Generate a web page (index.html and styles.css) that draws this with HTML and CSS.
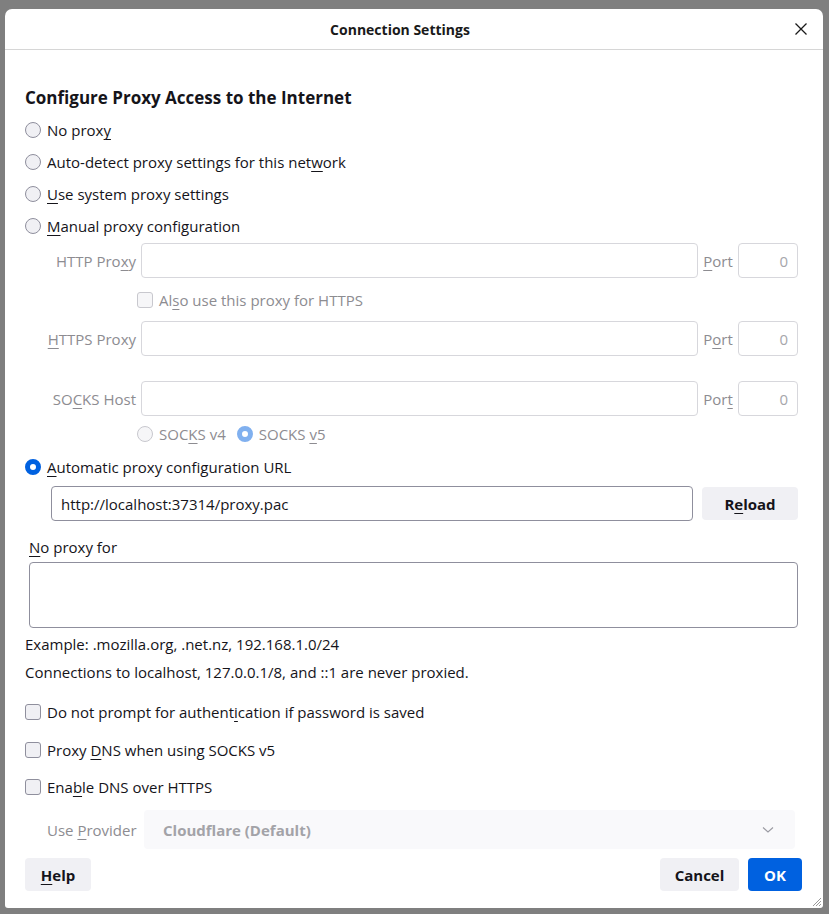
FILE: index.html
```html
<!DOCTYPE html>
<html>
<head>
<meta charset="utf-8">
<link rel="stylesheet" href="styles.css">
</head>
<body>
<div class="dialog">
  <div class="titlebar">
    <span class="title">Connection Settings</span>
    <svg class="close" width="14" height="14" viewBox="0 0 14 14"><path d="M1.5 1.5 L12.5 12.5 M12.5 1.5 L1.5 12.5" stroke="#1a1a1a" stroke-width="1.3" fill="none"/></svg>
  </div>
  <div class="content">
    <h1 class="heading">Configure Proxy Access to the Internet</h1>
    <div class="row"><span class="radio"></span><span>No prox<u>y</u></span></div>
    <div class="row"><span class="radio"></span><span>Auto-detect proxy settings for this net<u>w</u>ork</span></div>
    <div class="row"><span class="radio"></span><span><u>U</u>se system proxy settings</span></div>
    <div class="row"><span class="radio"></span><span><u>M</u>anual proxy configuration</span></div>

    <div class="proxyrow first">
      <span class="plabel">HTTP Pro<u>x</u>y</span>
      <span class="field"></span>
      <span class="portlabel"><u>P</u>ort</span>
      <span class="port">0</span>
    </div>
    <div class="subrow chk">
      <span class="box dis"></span><span class="dim">Al<u>s</u>o use this proxy for HTTPS</span>
    </div>
    <div class="proxyrow">
      <span class="plabel"><u>H</u>TTPS Proxy</span>
      <span class="field"></span>
      <span class="portlabel">P<u>o</u>rt</span>
      <span class="port">0</span>
    </div>
    <div class="proxyrow socks">
      <span class="plabel">SO<u>C</u>KS Host</span>
      <span class="field"></span>
      <span class="portlabel">Por<u>t</u></span>
      <span class="port">0</span>
    </div>
    <div class="subrow socksv">
      <span class="radio dis"></span><span class="dim">SOC<u>K</u>S v4</span>
      <span class="radio checked dis v5"></span><span class="dim">SOCKS <u>v</u>5</span>
    </div>
    <div class="row auto"><span class="radio checked"></span><span><u>A</u>utomatic proxy configuration URL</span></div>
    <div class="urlrow">
      <span class="url">http://localhost:37314/proxy.pac</span>
      <span class="btn reload">R<u>e</u>load</span>
    </div>
    <div class="noproxy"><u>N</u>o proxy for</div>
    <div class="textarea"></div>
    <div class="note n1">Example: .mozilla.org, .net.nz, 192.168.1.0/24</div>
    <div class="note">Connections to localhost, 127.0.0.1/8, and ::1 are never proxied.</div>
    <div class="row crow c1"><span class="box"></span><span>Do not prompt for authent<u>i</u>cation if password is saved</span></div>
    <div class="row crow"><span class="box"></span><span>Proxy <u>D</u>NS when using SOCKS v5</span></div>
    <div class="row crow c3"><span class="box"></span><span>Ena<u>b</u>le DNS over HTTPS</span></div>
    <div class="provider">
      <span class="dim plab">Use <u>P</u>rovider</span>
      <span class="select"><span>Cloudflare (Default)</span>
        <svg width="12" height="8" viewBox="0 0 12 8"><path d="M1 1.5 L6 6 L11 1.5" stroke="#9a9aa2" stroke-width="1.1" fill="none"/></svg>
      </span>
    </div>
    <div class="footer">
      <span class="btn help"><u>H</u>elp</span>
      <span class="spacer"></span>
      <span class="btn cancel">Cancel</span>
      <span class="btn ok">OK</span>
    </div>
  </div>
  <svg class="grip" width="12" height="12" viewBox="0 0 12 12"><path d="M11 3 L3 11 M11 6 L6 11 M11 9 L9 11" stroke="#9a9a9a" stroke-width="1" fill="none"/></svg>
</div>
</body>
</html>
```
FILE: styles.css
```css
html, body {
  margin: 0;
  padding: 0;
  background: #7f7f7f;
  width: 829px;
  height: 914px;
  overflow: hidden;
}
body {
  font-family: "Open Sans", "Noto Sans", sans-serif;
  font-size: 15px;
  color: #15141a;
}
u {
  text-decoration: underline;
  text-underline-offset: 3px;
  text-decoration-thickness: 1px;
}
.dialog {
  position: relative;
  margin: 9px 0 0 5px;
  width: 818px;
  height: 899px;
  background: #fff;
  border-radius: 7px 7px 3px 3px;
  display: flex;
  flex-direction: column;
  box-sizing: border-box;
}
.titlebar {
  height: 40px;
  border-bottom: 1px solid #d6d6d6;
  display: flex;
  align-items: center;
  justify-content: center;
  padding-right: 28px;
  position: relative;
  flex: none;
}
.title {
  font-weight: 700;
  font-size: 14px;
  color: #1a1a1a;
}
.close {
  position: absolute;
  right: 15px;
  top: 13px;
}
.content {
  padding: 0 25px 0 15px;
  display: flex;
  flex-direction: column;
}
.heading {
  margin: 34px 0 2px 5px;
  font-size: 17px;
  font-weight: 700;
  line-height: 28px;
  height: 28px;
}
.row {
  display: flex;
  align-items: center;
  height: 32px;
  padding-left: 5px;
  gap: 6px;
}
.radio {
  width: 14px;
  height: 14px;
  border: 1px solid #8f8f9d;
  border-radius: 50%;
  background: #f0f0f4;
  flex: none;
  box-sizing: content-box;
}
.radio.checked {
  width: 6px;
  height: 6px;
  border: 5px solid #0061e0;
  background: #fff;
}
.radio.dis {
  border-color: #c8c8ce;
  background: #f6f6f8;
}
.radio.checked.dis {
  border-color: #80b0ef;
  background: #fff;
}
.box {
  width: 14px;
  height: 14px;
  border: 1px solid #8f8f9d;
  border-radius: 3px;
  background: #f0f0f4;
  flex: none;
}
.box.dis {
  border-color: #c8c8ce;
  background: #f6f6f8;
}
.dim {
  color: #8d8c91;
}
.proxyrow {
  display: flex;
  align-items: center;
  height: 35px;
  color: #8d8c91;
}
.proxyrow.first {
  margin-top: 1px;
}
.proxyrow.socks {
  margin-top: 25px;
}
.plabel {
  width: 116px;
  text-align: right;
  flex: none;
}
.field {
  margin-left: 5px;
  flex: 1;
  height: 35px;
  box-sizing: border-box;
  border: 1px solid #d7d7dc;
  border-radius: 4px;
}
.portlabel {
  width: 40px;
  text-align: center;
  flex: none;
}
.port {
  width: 60px;
  height: 35px;
  box-sizing: border-box;
  border: 1px solid #d7d7dc;
  border-radius: 4px;
  display: flex;
  align-items: center;
  justify-content: flex-end;
  padding-right: 9px;
  color: #a6a6ab;
  flex: none;
}
.subrow {
  display: flex;
  align-items: center;
  padding-left: 117px;
  gap: 6px;
}
.subrow.chk {
  height: 43px;
}
.subrow.socksv {
  height: 36px;
}
.radio.v5 {
  margin-left: 5px;
}
.row.auto {
  height: 30px;
}
.urlrow {
  display: flex;
  align-items: center;
  margin-top: 4px;
  padding-left: 31px;
  height: 35px;
  gap: 9px;
}
.url {
  flex: 1;
  height: 35px;
  box-sizing: border-box;
  border: 1px solid #8f8f9d;
  border-radius: 4px;
  display: flex;
  align-items: center;
  padding-left: 9px;
}
.btn {
  display: flex;
  align-items: center;
  justify-content: center;
  font-weight: 700;
  border-radius: 4px;
  height: 33px;
  background: #f0f0f4;
  flex: none;
}
.reload {
  width: 96px;
}
.noproxy {
  margin-top: 11px;
  height: 30px;
  line-height: 30px;
  padding-left: 9px;
}
.textarea {
  margin-left: 9px;
  height: 66px;
  box-sizing: border-box;
  border: 1px solid #8f8f9d;
  border-radius: 4px;
}
.note {
  height: 28px;
  line-height: 28px;
  padding-left: 5px;
}
.note.n1 {
  margin-top: 2px;
}
.row.crow {
  height: 38px;
  padding-left: 5px;
}
.crow.c1 {
  margin-top: 7px;
}
.crow.c3 {
  height: 36px;
}
.provider {
  display: flex;
  align-items: center;
  margin-top: 5px;
  height: 39px;
  padding-left: 27px;
  padding-right: 3px;
}
.plab {
  width: 97px;
  flex: none;
}
.select {
  flex: 1;
  height: 39px;
  background: #f9f9fb;
  border-radius: 4px;
  display: flex;
  align-items: center;
  justify-content: space-between;
  padding: 0 21px 0 19px;
  font-weight: 700;
  color: #a3a3a8;
}
.footer {
  display: flex;
  align-items: center;
  margin-top: 9px;
  padding-left: 5px;
  margin-right: -4px;
  gap: 9px;
}
.spacer {
  flex: 1;
}
.help {
  width: 66px;
}
.cancel {
  width: 79px;
}
.ok {
  width: 54px;
  background: #0061e0;
  color: #fff;
}
.grip {
  position: absolute;
  right: 1px;
  bottom: 1px;
}
```
